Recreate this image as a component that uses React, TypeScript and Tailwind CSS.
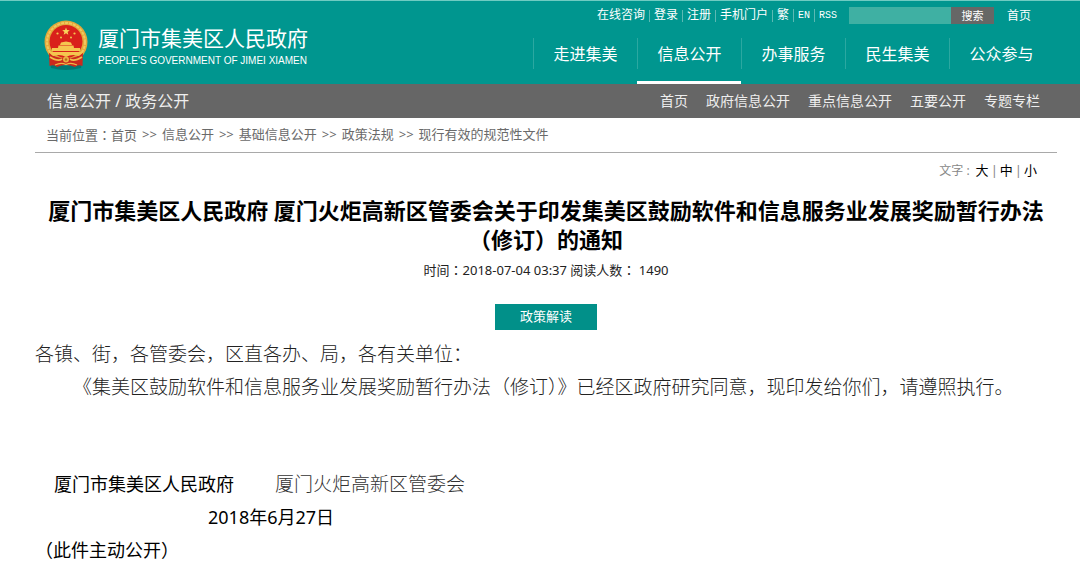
import React from "react";

const quickLinks = ["在线咨询", "登录", "注册", "手机门户", "繁", "EN", "RSS"];
const mainNav = ["走进集美", "信息公开", "办事服务", "民生集美", "公众参与"];
const subNav = ["首页", "政府信息公开", "重点信息公开", "五要公开", "专题专栏"];
const crumbs = ["首页", "信息公开", "基础信息公开", "政策法规", "现行有效的规范性文件"];

function Colon() {
  return <span className="font-['Noto_Sans_CJK_TC',sans-serif]">：</span>;
}

function Emblem() {
  return (
    <svg viewBox="0 0 44 50" className="h-[50px] w-11 shrink-0" aria-hidden="true">
      <path d="M6 42 L22 46 L38 42 L37 48 Q22 52 7 48 Z" fill="#075f5a" opacity="0.55" />
      <circle cx="22" cy="22" r="21.5" fill="#e2a83a" />
      <circle cx="22" cy="22" r="19" fill="none" stroke="#f0c75f" strokeWidth="2" strokeDasharray="3 1" />
      <path d="M5 33 Q13 39 22 38 Q31 39 39 33 L38.500 46 Q34 44 31 47 Q22 43 13 47 Q10 44 5.500 46 Z" fill="#cc2a1d" />
      <circle cx="22" cy="21.500" r="16.500" fill="#d9201b" />
      <path d="M22 7.500 l1 2.600 2.800 .2 -2.200 1.800 .7 2.700 -2.300 -1.500 -2.300 1.500 .7 -2.700 -2.200 -1.800 2.800 -.2z" fill="#f8d35c" />
      <g fill="#f5c64f">
        <circle cx="13.500" cy="13.500" r="1.100" />
        <circle cx="30.500" cy="13.500" r="1.100" />
        <circle cx="17" cy="17.500" r="1" />
        <circle cx="27" cy="17.500" r="1" />
        <path d="M17 22.500 L22 21.500 L27 22.500 L28 25 H16 Z" />
        <path d="M14.500 25.500 H29.500 L30 28 H36 V31 H8 V28 H14 Z" />
        <path d="M5 32 H39 L35 36 Q28 33.500 22 37 Q16 33.500 9 36 Z" />
      </g>
      <path d="M6 37 Q14 42 18 39 M38 37 Q30 42 26 39" stroke="#f0bd4a" strokeWidth="1.600" fill="none" />
      <circle cx="22" cy="39.500" r="3" fill="#e9b043" />
      <circle cx="22" cy="39.500" r="1.200" fill="#b96d1c" />
      <path d="M11 45 Q17 42 22 44.500 Q27 42 33 45" stroke="#efb845" strokeWidth="1.200" fill="none" />
    </svg>
  );
}

function Header() {
  return (
    <header className="flex h-[84px] justify-between border-t border-[#6fcbc2] bg-[#00968f] pr-[27px] pl-11 text-white">
      <a href="#" className="flex items-start gap-[10px] pt-[19px]">
        <Emblem />
        <span className="flex flex-col pt-1">
          <span className="text-[21px] leading-7">厦门市集美区人民政府</span>
          <span className="pt-[3px] font-['Liberation_Sans',sans-serif] text-[10px] leading-3">
            PEOPLE'S GOVERNMENT OF JIMEI XIAMEN
          </span>
        </span>
      </a>
      <div className="flex flex-col justify-between">
        <div className="flex h-[29px] items-center justify-end pr-[22px]">
          <ul className="flex items-center font-['Liberation_Mono','Noto_Sans_CJK_SC',sans-serif] text-xs leading-3">
            {quickLinks.map((label, i) => (
              <li
                key={label}
                className={i === 0 ? "px-1" : "border-l border-[#5cb9b3] px-1"}
              >
                <a href="#" className={/^[A-Z]+$/.test(label) ? "text-[10px]" : ""}>
                  {label}
                </a>
              </li>
            ))}
          </ul>
          <form className="ml-2 flex h-[17px]" onSubmit={(e) => e.preventDefault()}>
            <input
              type="text"
              aria-label="搜索"
              className="w-[102px] bg-[#3fb0a3] px-1 text-[11px] text-white outline-none"
            />
            <button type="submit" className="w-[43px] bg-[#666766] text-[11px] leading-4">
              搜索
            </button>
          </form>
          <a href="#" className="ml-[13px] text-xs">
            首页
          </a>
        </div>
        <nav className="flex">
          {mainNav.map((label, i) => (
            <a
              key={label}
              href="#"
              className={
                i === 1
                  ? "flex h-[46px] w-[104px] flex-col border-b-[3px] border-white"
                  : "flex h-[46px] w-[104px] flex-col"
              }
            >
              <span className="flex h-[31px] items-center justify-center border-l border-[#2ba8a1] text-base">
                {label}
              </span>
            </a>
          ))}
        </nav>
      </div>
    </header>
  );
}

export default function App() {
  return (
    <div className="min-h-screen bg-white font-['Noto_Sans','Noto_Sans_CJK_SC',sans-serif] text-black">
      <Header />
      <div className="flex h-[34px] items-center justify-between bg-[#666666] pr-10 pl-[47px] text-[#eeeeee]">
        <h2 className="text-base">信息公开 / 政务公开</h2>
        <nav className="flex gap-[18px] text-sm">
          {subNav.map((label) => (
            <a key={label} href="#">
              {label}
            </a>
          ))}
        </nav>
      </div>
      <main className="pr-[23px] pl-[35px]">
        <nav className="flex h-[35px] items-center gap-[5px] border-b border-[#a9a9a9] pl-[11px] text-[13px] text-[#6a6a6a]">
          <span>
            当前位置
            <Colon />
            <a href="#">{crumbs[0]}</a>
          </span>
          {crumbs.slice(1).map((label) => (
            <React.Fragment key={label}>
              <span>&gt;&gt;</span>
              <a href="#">{label}</a>
            </React.Fragment>
          ))}
        </nav>
        <div className="flex h-9 items-center justify-end gap-0.5 pr-5 text-[13px] text-[#888888]">
          <span className="pr-1 text-xs">文字 :</span>
          <button type="button" className="text-black">大</button>
          <span>|</span>
          <button type="button" className="text-black">中</button>
          <span>|</span>
          <button type="button" className="text-black">小</button>
        </div>
        <article>
          <h1 className="pt-[7px] text-center text-[22px] leading-[29px] font-bold">
            厦门市集美区人民政府 厦门火炬高新区管委会关于印发集美区鼓励软件和信息服务业发展奖励暂行办法
            <br />
            （修订）的通知
          </h1>
          <p className="pt-[6px] text-center text-[13px] leading-5 text-[#222222]">
            时间
            <Colon />
            2018-07-04 03:37 阅读人数
            <Colon /> 1490
          </p>
          <div className="flex justify-center pt-6">
            <a
              href="#"
              className="flex h-[26px] w-[102px] items-center justify-center bg-[#019089] text-[13px] text-white"
            >
              政策解读
            </a>
          </div>
          <div className="pt-2 text-lg leading-[33px]">
            <p className="text-[19px] font-light text-[#222222]">
              各镇、街，各管委会，区直各办、局，各有关单位：
            </p>
            <p className="indent-[2em] text-[19px] font-light text-[#222222]">
              《集美区鼓励软件和信息服务业发展奖励暂行办法（修订）》已经区政府研究同意，现印发给你们，请遵照执行。
            </p>
            <p className="flex gap-[41px] pt-16 pl-[19px]">
              <span>厦门市集美区人民政府</span>
              <span className="text-[19px] font-light text-[#333333]">厦门火炬高新区管委会</span>
            </p>
            <p className="pl-[173px]">2018年6月27日</p>
            <p>（此件主动公开）</p>
          </div>
        </article>
      </main>
    </div>
  );
}
